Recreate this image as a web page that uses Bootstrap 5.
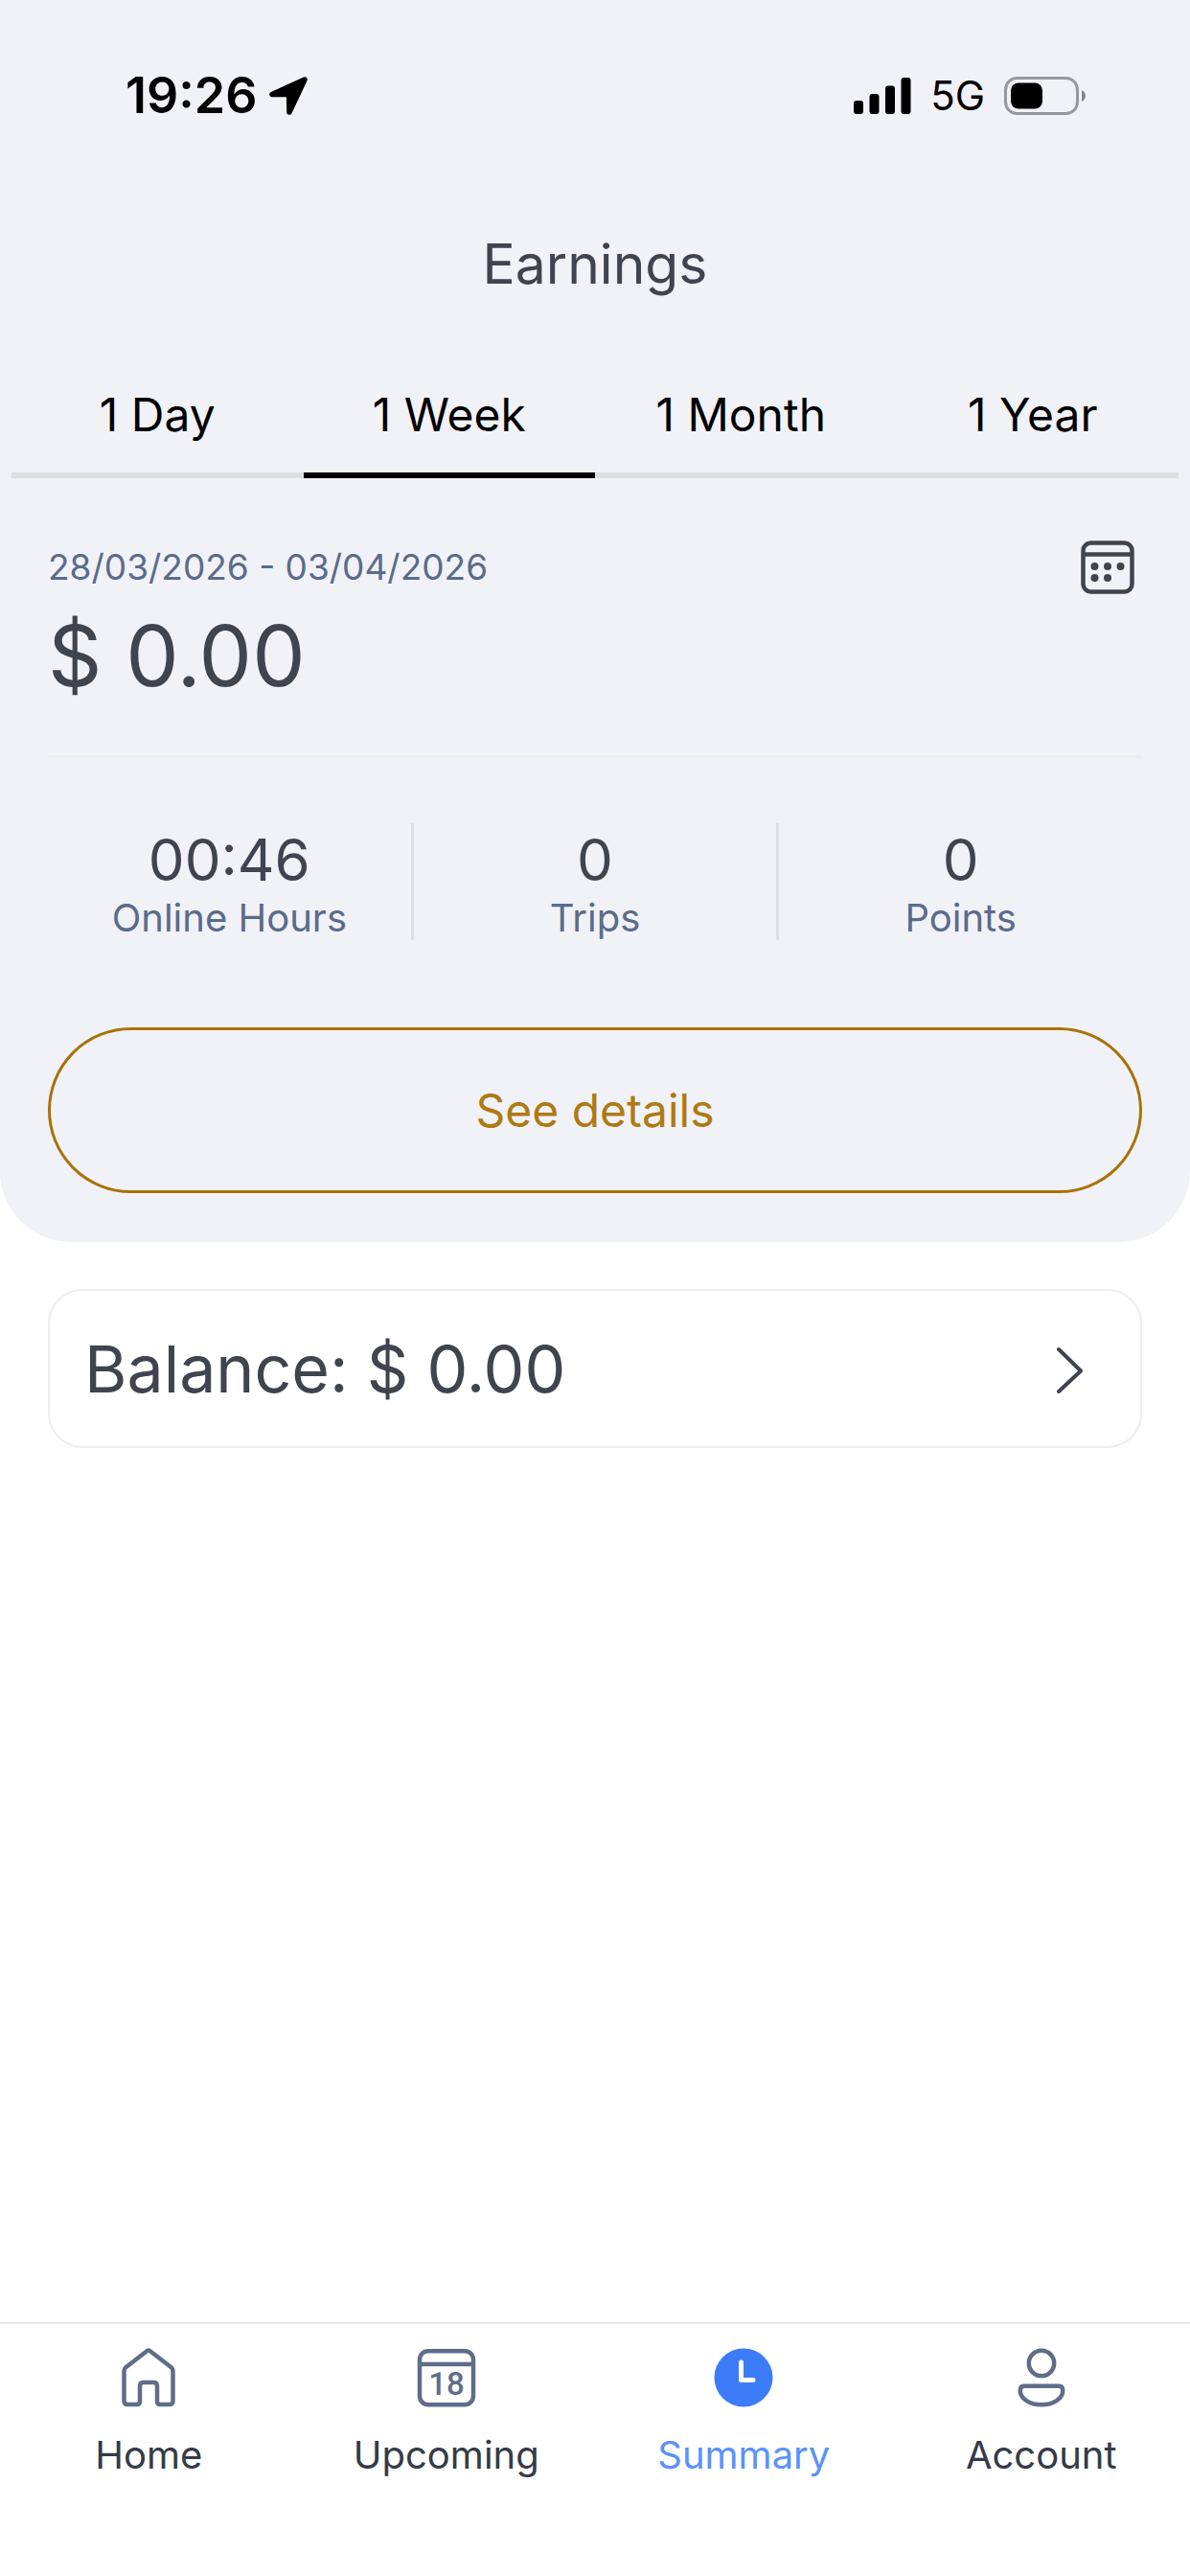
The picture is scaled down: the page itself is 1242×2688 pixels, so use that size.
<!DOCTYPE html>
<html lang="en">
<head>
<meta charset="utf-8">
<meta name="viewport" content="width=device-width, initial-scale=1">
<title>Earnings</title>
<link href="https://cdn.jsdelivr.net/npm/bootstrap@5.3.0/dist/css/bootstrap.min.css" rel="stylesheet">
<style>
  body { font-family: Inter, "Liberation Sans", sans-serif; color: #3f444e; background: #fff; }
  .panel { background: #f1f2f8; border-radius: 0 0 74px 74px; padding-bottom: 51px; }
  .status { height: 200px; padding: 0 108px 0 131px; color: #000; }
  .status-left { gap: 12px; }
  .clock { font-size: 52px; font-weight: 600; line-height: 60px; }
  .network { font-size: 42px; line-height: 60px; }
  .screen-title { font-size: 57px; font-weight: 400; line-height: 152px; }
  .tabs { padding: 0 12px; }
  .tabs .nav-link { padding: 51px 0 30px; border: 0; border-bottom: 6px solid #dfdfdf; border-radius: 0; color: #000; font-size: 48px; line-height: 60px; }
  .tabs .nav-link.active { background: none; color: #000; border-color: #000; }
  .inset { padding: 0 50px; }
  .period { padding-top: 65px; }
  .period-text { font-size: 37px; line-height: 56px; color: #5b6b8a; }
  .calendar-btn { margin-right: 8px; color: #3f444e; line-height: 1; }
  .amount { font-size: 88px; line-height: 104px; margin-top: 12px; }
  .rule { height: 3px; background: #ededea; margin: 52px 0 68px; }
  .stat-value { font-size: 60px; line-height: 76px; }
  .stat-label { font-size: 40px; line-height: 46px; color: #5b6b8a; }
  .divider { width: 3px; background: #dedfe1; }
  .details { margin-top: 91px; height: 173px; border: 3px solid #a97206; color: #ae7a12; font-size: 48px; }
  .details:hover { border-color: #a97206; color: #8d610b; }
  .balance { margin-top: 49px; height: 166px; padding: 0 58px 0 36px; border: 2px solid #eee; border-radius: 36px; color: #3f444e; font-size: 68px; }
  .bottom-bar { height: 265px; border-top: 2px solid #e6e6e6; padding-top: 25px; }
  .bottom-bar a { color: #343b47; font-size: 40px; line-height: 50px; }
  .bottom-bar a.current { color: #5a92fb; }
  .bottom-bar svg { color: #5f6d89; margin-bottom: 25px; }
</style>
</head>
<body>
<div class="d-flex flex-column min-vh-100">
  <header class="panel">
    <div class="status d-flex align-items-center justify-content-between">
      <div class="status-left d-flex align-items-center">
        <span class="clock">19:26</span>
        <svg width="40" height="40" viewBox="0 0 40 40" aria-hidden="true"><path d="M37 3 3 18.500H20.500L21 37Z" fill="currentColor" stroke="currentColor" stroke-width="5.500" stroke-linejoin="round"/></svg>
      </div>
      <div class="d-flex align-items-center">
        <svg width="60" height="38" viewBox="0 0 60 38" fill="currentColor" aria-hidden="true"><rect y="24" width="10" height="14" rx="3"/><rect x="16.500" y="17" width="10" height="21" rx="3"/><rect x="33" y="8.500" width="10" height="29.500" rx="3"/><rect x="49.500" width="10" height="38" rx="3"/></svg>
        <span class="network mx-3 px-1">5G</span>
        <svg width="86" height="40" viewBox="0 0 86 40" aria-hidden="true"><rect x="1.500" y="1.500" width="75" height="37" rx="12" fill="none" stroke="#98999c" stroke-width="3"/><rect x="7" y="6.500" width="33" height="27" rx="8" fill="currentColor"/><path d="M81 14Q85 16 85 20T81 26Z" fill="#88898c"/></svg>
      </div>
    </div>
    <h1 class="screen-title text-center m-0">Earnings</h1>
    <nav class="tabs nav nav-pills nav-fill flex-nowrap" aria-label="Period">
      <div class="col-3"><button type="button" class="nav-link w-100">1 Day</button></div>
      <div class="col-3"><button type="button" class="nav-link w-100 active" aria-current="true">1 Week</button></div>
      <div class="col-3"><button type="button" class="nav-link w-100">1 Month</button></div>
      <div class="col-3"><button type="button" class="nav-link w-100">1 Year</button></div>
    </nav>
    <div class="inset">
      <div class="period d-flex align-items-center justify-content-between">
        <span class="period-text">28/03/2026 - 03/04/2026</span>
        <button type="button" class="calendar-btn btn p-0 border-0 d-flex" aria-label="Choose dates">
          <svg width="56" height="56" viewBox="0 0 56 56" fill="none" stroke="currentColor" stroke-width="4.500"><rect x="2.500" y="2.500" width="51" height="51" rx="8"/><path d="M2 14.500H54"/><g fill="currentColor" stroke="none"><circle cx="14.500" cy="27" r="4"/><circle cx="28" cy="27" r="4"/><circle cx="41.500" cy="27" r="4"/><circle cx="14.500" cy="39" r="4"/><circle cx="28" cy="39" r="4"/></g></svg>
        </button>
      </div>
      <div class="amount">$ 0.00</div>
      <div class="rule"></div>
      <div class="d-flex text-center">
        <div class="col"><div class="stat-value">00:46</div><div class="stat-label">Online Hours</div></div>
        <div class="divider"></div>
        <div class="col"><div class="stat-value">0</div><div class="stat-label">Trips</div></div>
        <div class="divider"></div>
        <div class="col"><div class="stat-value">0</div><div class="stat-label">Points</div></div>
      </div>
      <button type="button" class="details btn rounded-pill w-100">See details</button>
    </div>
  </header>
  <main class="inset flex-grow-1">
    <a href="#balance" class="balance d-flex align-items-center justify-content-between text-decoration-none">
      <span>Balance: $ 0.00</span>
      <svg width="30" height="52" viewBox="0 0 30 52" fill="none" stroke="currentColor" stroke-width="4" stroke-linecap="round" stroke-linejoin="round" aria-hidden="true"><path d="M3 6 26 28.500 3 50"/></svg>
    </a>
  </main>
  <nav class="bottom-bar d-flex text-center" aria-label="Main">
    <a href="#home" class="col d-flex flex-column align-items-center text-decoration-none">
      <svg width="62" height="62" viewBox="0 0 62 62" fill="none" stroke="currentColor" stroke-width="4.500" stroke-linejoin="round" aria-hidden="true"><path d="M31 2.500Q32 2.500 33 3.500L55 20.500Q56.500 22 56.500 24V55.500Q56.500 59 53 59H43Q40 59 40 55.500V40Q40 36 36.500 36H25.500Q22 36 22 40V55.500Q22 59 19 59H9Q5.500 59 5.500 55.500V24Q5.500 22 7 20.500L29 3.500Q30 2.500 31 2.500Z"/></svg>
      Home
    </a>
    <a href="#upcoming" class="col d-flex flex-column align-items-center text-decoration-none">
      <svg width="62" height="62" viewBox="0 0 62 62" fill="none" stroke="currentColor" stroke-width="4.500" aria-hidden="true"><rect x="3" y="3.300" width="56" height="56" rx="9"/><path d="M3 17H59"/><text x="31" y="49" text-anchor="middle" font-family="Roboto, sans-serif" font-size="33" font-weight="500" fill="currentColor" stroke="none">18</text></svg>
      Upcoming
    </a>
    <a href="#summary" class="current col d-flex flex-column align-items-center text-decoration-none" aria-current="page">
      <svg width="62" height="62" viewBox="0 0 62 62" fill="none" aria-hidden="true"><circle cx="31" cy="31" r="30.500" fill="#3d7cf7"/><path d="M28.500 15V33.500H41" stroke="#fff" stroke-width="5" stroke-linecap="round" stroke-linejoin="round"/></svg>
      Summary
    </a>
    <a href="#account" class="col d-flex flex-column align-items-center text-decoration-none">
      <svg width="62" height="62" viewBox="0 0 62 62" fill="none" stroke="currentColor" stroke-width="4.500" aria-hidden="true"><circle cx="31" cy="16" r="13.200"/><path d="M13 39.800H49Q53.300 39.800 53.300 44.500C53.300 53 43 59.300 31 59.300S8.700 53 8.700 44.500Q8.700 39.800 13 39.800Z"/></svg>
      Account
    </a>
  </nav>
</div>
<script src="https://cdn.jsdelivr.net/npm/bootstrap@5.3.0/dist/js/bootstrap.bundle.min.js"></script>
</body>
</html>
